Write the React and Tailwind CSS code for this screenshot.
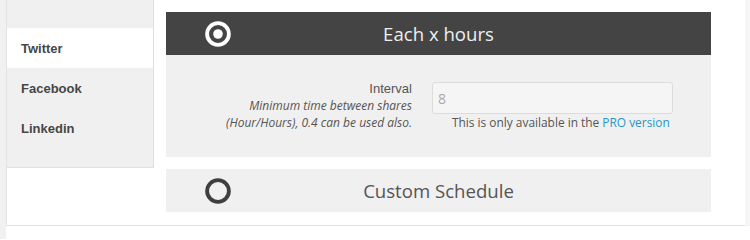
const tabs = ["Twitter", "Facebook", "Linkedin"];

function Radio({ checked }) {
  return (
    <svg width="26" height="26" viewBox="0 0 26 26" className="block">
      <circle
        cx="13"
        cy="13"
        r="10.9"
        fill="none"
        stroke={checked ? "#ffffff" : "#3f3f3f"}
        strokeWidth="3.8"
      />
      {checked && <circle cx="13" cy="13" r="4.8" fill="#ffffff" />}
    </svg>
  );
}

function App() {
  const active = "Twitter";

  return (
    <div className="flex h-[239px] w-[750px] overflow-hidden bg-white">
      <div className="h-full w-[6px] bg-[#f1f1f1]" />

      <div className="flex h-[226px] w-[739px] border-b border-l border-[#e2e2e2] bg-white">
        {/* sidebar tabs */}
        <div className="h-[168px] w-[147px] border-b border-r border-[#e0e0e0] bg-[#f0f0f0] pt-[28px] font-['Liberation_Sans',Arial,sans-serif] text-[13px] font-bold text-[#464646]">
          {tabs.map((tab) => (
            <div
              key={tab}
              className={`flex h-[40px] items-center pl-[14px] pt-[1px] ${
                tab === active ? "bg-white" : ""
              }`}
            >
              {tab}
            </div>
          ))}
        </div>

        {/* schedule options */}
        <div className="ml-[12px] w-[545px] pt-[12px] font-['Open_Sans',sans-serif]">
          <div className="grid h-[43px] grid-cols-[1fr_auto_1fr] items-center bg-[#444444]">
            <div className="pl-[39px]">
              <Radio checked />
            </div>
            <div className="text-[18.6px] text-[#eeeeee]">Each x hours</div>
            <div />
          </div>

          <div className="flex h-[102px] gap-[20px] bg-[#f0f0f0] pt-[25px]">
            <div className="w-[246px] text-right">
              <div className="font-['Liberation_Sans',Arial,sans-serif] text-[13px] leading-[17px] text-[#555]">
                Interval
              </div>
              <div className="text-[12px] italic leading-[17px] text-[#555]">
                Minimum time between shares
                <br />
                (Hour/Hours), 0.4 can be used also.
              </div>
            </div>
            <div className="w-[241px]">
              <input
                type="text"
                placeholder="8"
                disabled
                className="mt-[2px] h-[32px] w-full rounded-[3px] border border-[#dcdcdc] bg-[#f5f5f5] px-[5px] font-['Open_Sans',sans-serif] text-[14px] text-[#aaa] outline-none placeholder:text-[#aaa]"
              />
              <div className="pl-[20px] text-[11.9px] leading-[17px] text-[#555]">
                This is only available in the{" "}
                <a href="#" className="text-[#2a95c5]">
                  PRO version
                </a>
              </div>
            </div>
          </div>

          <div className="mt-[12px] grid h-[43px] grid-cols-[1fr_auto_1fr] items-center bg-[#f0f0f0]">
            <div className="pl-[39px]">
              <Radio />
            </div>
            <div className="text-[18.6px] text-[#555]">Custom Schedule</div>
            <div />
          </div>
        </div>
      </div>

      <div className="h-[226px] w-[5px] bg-[#f6f6f6]" />
    </div>
  );
}

export default App;
